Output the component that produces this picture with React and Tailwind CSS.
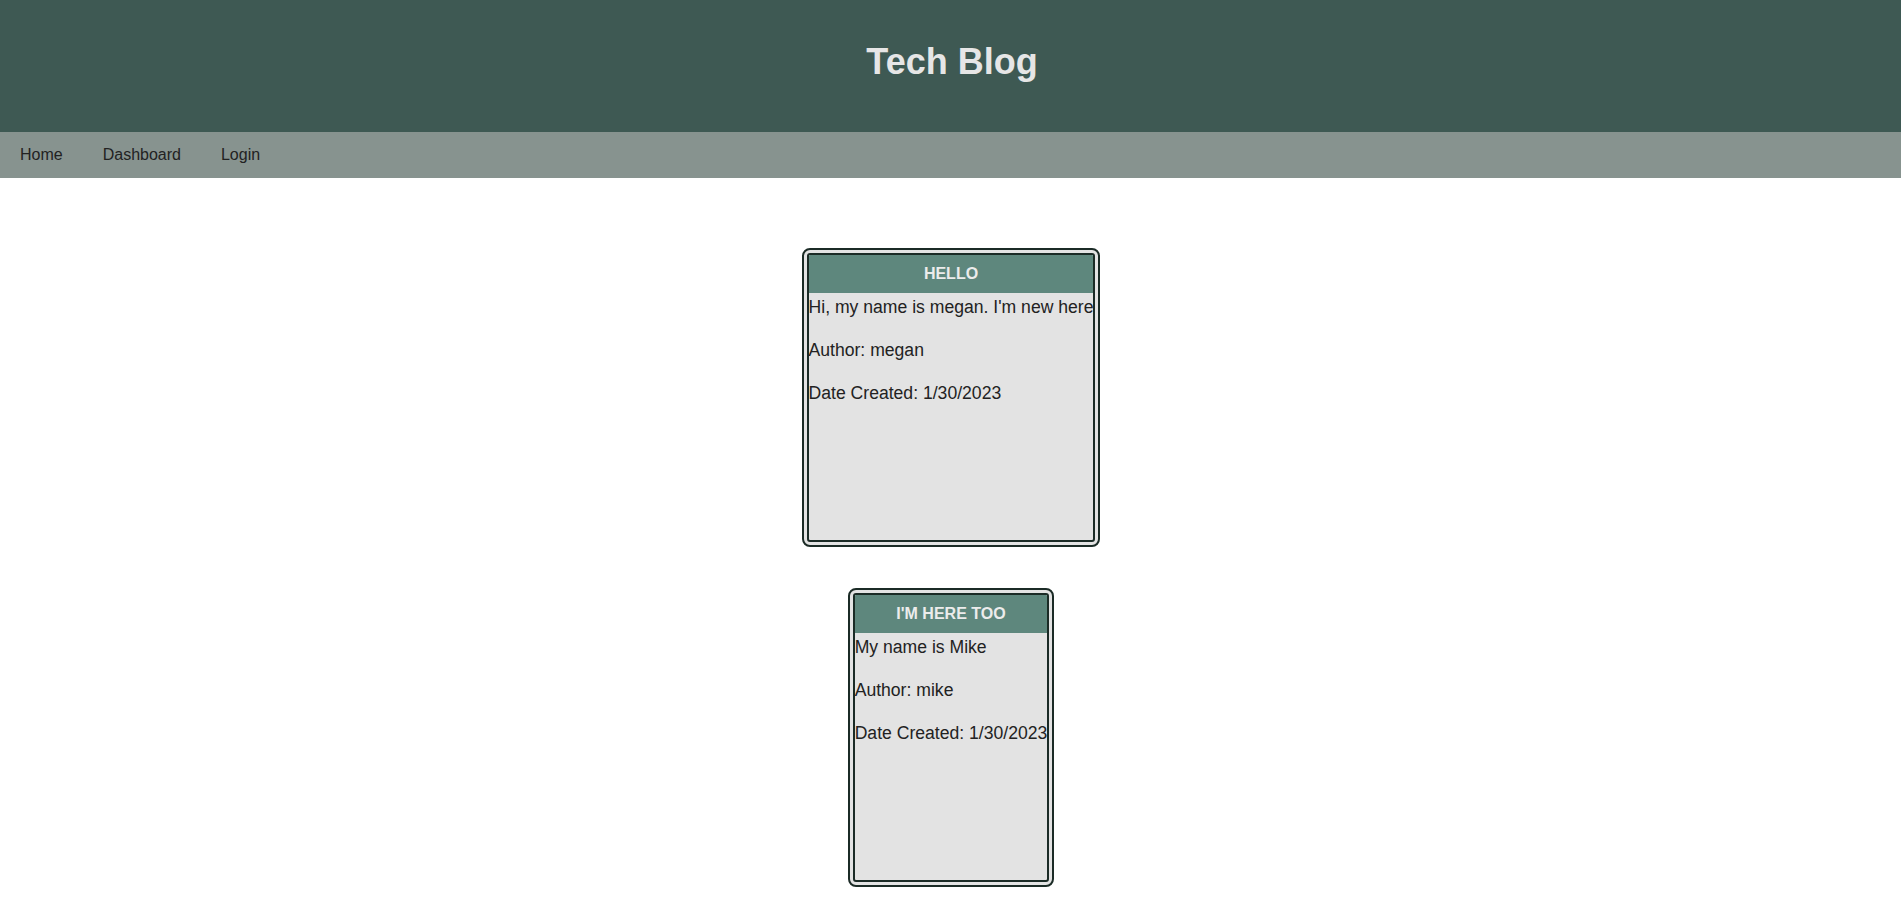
import React from "react";

const posts = [
  { title: "HELLO", body: "Hi, my name is megan. I'm new here", author: "megan", date: "1/30/2023" },
  { title: "I'M HERE TOO", body: "My name is Mike", author: "mike", date: "1/30/2023" },
];

function Card({ p }) {
  return (
    <div className="w-fit h-[299px] border-[7px] border-double border-[#1b2b26] rounded-[8px] bg-[#e3e3e3] overflow-hidden">
      <div className="h-[38px] bg-[#5e877d] flex items-center justify-center text-[16px] font-bold text-[#ececec]">
        {p.title}
      </div>
      <div className="text-[17.6px] leading-[20px] text-[#222] pt-[4px] whitespace-nowrap">
        <p className="mb-[23px]">{p.body}</p>
        <p className="mb-[23px]">Author: {p.author}</p>
        <p>Date Created: {p.date}</p>
      </div>
    </div>
  );
}

export default function App() {
  return (
    <div className="min-h-[900px] bg-white" style={{ fontFamily: '"Liberation Sans", Arial, sans-serif' }}>
      <header className="h-[132px] bg-[#3e5953] pt-[44px] pl-[3px]">
        <h1 className="text-center text-[36px] leading-[36px] font-bold text-[#e6e6e6]">Tech Blog</h1>
      </header>
      <nav className="h-[46px] bg-[#87938f] flex text-[16px] leading-[46px] text-[#222]">
        <a className="px-5">Home</a>
        <a className="px-5">Dashboard</a>
        <a className="px-5">Login</a>
      </nav>
      <main className="flex flex-col items-center gap-[41px] pt-[70px] pl-[1px]">
        {posts.map((p) => (
          <Card key={p.title} p={p} />
        ))}
      </main>
    </div>
  );
}
